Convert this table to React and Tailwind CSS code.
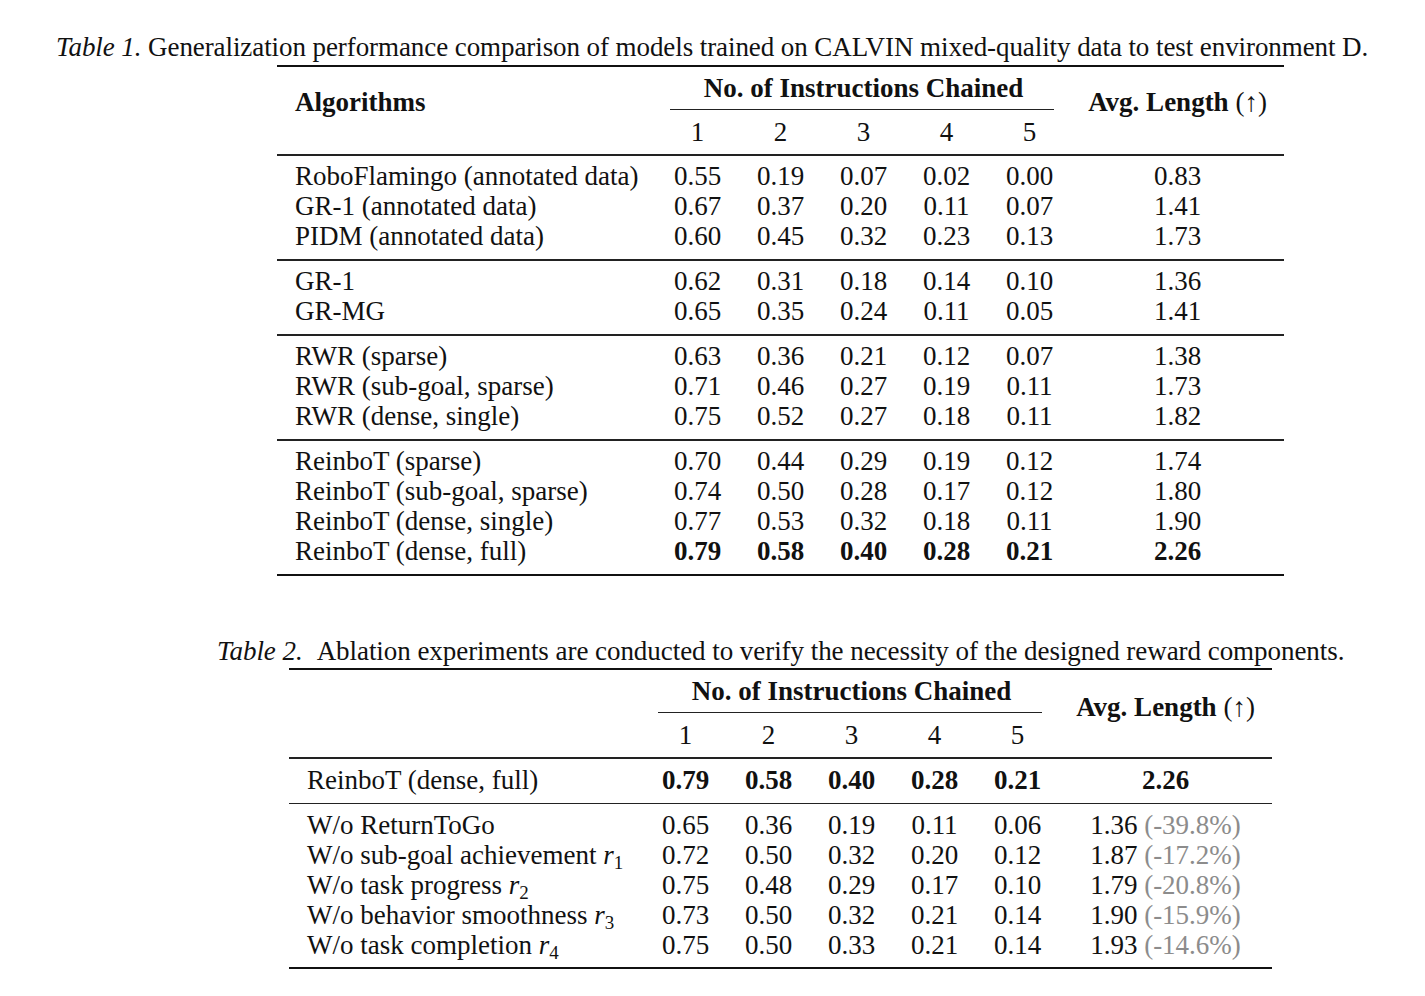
const table1 = [
  [
    ['RoboFlamingo (annotated data)', ['0.55', '0.19', '0.07', '0.02', '0.00'], '0.83'],
    ['GR-1 (annotated data)', ['0.67', '0.37', '0.20', '0.11', '0.07'], '1.41'],
    ['PIDM (annotated data)', ['0.60', '0.45', '0.32', '0.23', '0.13'], '1.73'],
  ],
  [
    ['GR-1', ['0.62', '0.31', '0.18', '0.14', '0.10'], '1.36'],
    ['GR-MG', ['0.65', '0.35', '0.24', '0.11', '0.05'], '1.41'],
  ],
  [
    ['RWR (sparse)', ['0.63', '0.36', '0.21', '0.12', '0.07'], '1.38'],
    ['RWR (sub-goal, sparse)', ['0.71', '0.46', '0.27', '0.19', '0.11'], '1.73'],
    ['RWR (dense, single)', ['0.75', '0.52', '0.27', '0.18', '0.11'], '1.82'],
  ],
  [
    ['ReinboT (sparse)', ['0.70', '0.44', '0.29', '0.19', '0.12'], '1.74'],
    ['ReinboT (sub-goal, sparse)', ['0.74', '0.50', '0.28', '0.17', '0.12'], '1.80'],
    ['ReinboT (dense, single)', ['0.77', '0.53', '0.32', '0.18', '0.11'], '1.90'],
    ['ReinboT (dense, full)', ['0.79', '0.58', '0.40', '0.28', '0.21'], '2.26', true],
  ],
]

const ablations = [
  ['W/o ReturnToGo', null, ['0.65', '0.36', '0.19', '0.11', '0.06'], '1.36', '(-39.8%)'],
  ['W/o sub-goal achievement', '1', ['0.72', '0.50', '0.32', '0.20', '0.12'], '1.87', '(-17.2%)'],
  ['W/o task progress', '2', ['0.75', '0.48', '0.29', '0.17', '0.10'], '1.79', '(-20.8%)'],
  ['W/o behavior smoothness', '3', ['0.73', '0.50', '0.32', '0.21', '0.14'], '1.90', '(-15.9%)'],
  ['W/o task completion', '4', ['0.75', '0.50', '0.33', '0.21', '0.14'], '1.93', '(-14.6%)'],
]

function Rule({ thick }) {
  return <div className={thick ? 'h-[2px] bg-[#111]' : 'h-[1.5px] bg-[#222]'} />
}

function Header({ labelW, label, labelPt, avgPt }) {
  return (
    <div className="flex">
      <div className={`${labelW} pl-[18px] font-bold ${labelPt}`}>{label}</div>
      <div className="w-[415px] pt-[6px] pb-[7px]">
        <div className="text-center font-bold">No. of Instructions Chained</div>
        <div className="mt-[6px] ml-[14px] mr-[17px] h-px bg-[#222]" />
        <div className="mt-[7px] flex">
          {['1', '2', '3', '4', '5'].map((n) => (
            <div key={n} className="w-[83px] text-center">{n}</div>
          ))}
        </div>
      </div>
      <div className={`flex-1 text-center ${avgPt}`}>
        <span className="font-bold">Avg. Length </span>(↑)
      </div>
    </div>
  )
}

function Cells({ values, bold }) {
  return values.map((v, i) => (
    <div key={i} className={`w-[83px] text-center ${bold ? 'font-bold' : ''}`}>{v}</div>
  ))
}

export default function App() {
  return (
    <div className="w-[1425px] h-[996px] bg-white text-[#111] text-[27px] leading-[30px] font-['Liberation_Serif',serif]">
      {/* Table 1 */}
      <div className="pt-[32px] pl-[56px] whitespace-nowrap tracking-[-0.08px]">
        <i>Table 1.</i> Generalization performance comparison of models trained on CALVIN mixed-quality data to test environment D.
      </div>
      <div className="ml-[277px] w-[1007px] mt-[3px]">
        <Rule thick />
        <Header labelW="w-[379px]" label="Algorithms" labelPt="pt-[20px]" avgPt="pt-[20px]" />
        <Rule />
        {table1.map((group, gi) => (
          <div key={gi}>
            <div className="pt-[5px] pb-[8.6px]">
              {group.map(([name, vals, avg, bold]) => (
                <div key={name} className="flex">
                  <div className="w-[379px] pl-[18px] whitespace-nowrap">{name}</div>
                  <Cells values={vals} bold={bold} />
                  <div className={`flex-1 text-center ${bold ? 'font-bold' : ''}`}>{avg}</div>
                </div>
              ))}
            </div>
            <Rule thick={gi === table1.length - 1} />
          </div>
        ))}
      </div>

      {/* Table 2 */}
      <div className="mt-[60px] pl-[217px] whitespace-nowrap tracking-[-0.05px]">
        <i>Table 2.</i>
        <span className="ml-[14px]">Ablation experiments are conducted to verify the necessity of the designed reward components.</span>
      </div>
      <div className="ml-[289px] w-[983px] mt-[2px]">
        <Rule thick />
        <Header labelW="w-[355px]" label="" labelPt="pt-[22px]" avgPt="pt-[22px]" />
        <Rule />
        <div className="pt-[6px] pb-[8px] flex">
          <div className="w-[355px] pl-[18px]">ReinboT (dense, full)</div>
          <Cells values={['0.79', '0.58', '0.40', '0.28', '0.21']} bold />
          <div className="flex-1 text-center font-bold">2.26</div>
        </div>
        <Rule />
        <div className="pt-[6px] pb-[7px]">
          {ablations.map(([name, sub, vals, avg, pct]) => (
            <div key={name} className="flex">
              <div className="w-[355px] pl-[18px] whitespace-nowrap">
                {name}
                {sub && (
                  <>
                    {' '}
                    <i>r</i>
                    <sub className="text-[19px]">{sub}</sub>
                  </>
                )}
              </div>
              <Cells values={vals} />
              <div className="flex-1 text-center">
                {avg} <span className="text-[#8c8c8c]">{pct}</span>
              </div>
            </div>
          ))}
        </div>
        <Rule thick />
      </div>
    </div>
  )
}
